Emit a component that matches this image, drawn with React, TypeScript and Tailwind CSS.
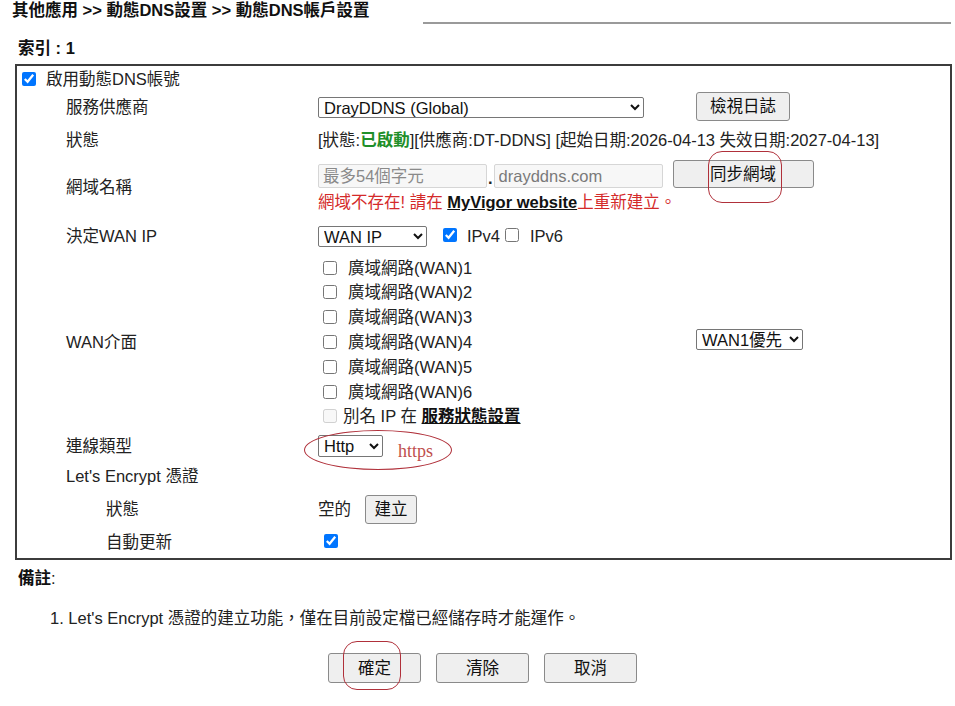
import React from "react";

const FONT = { fontFamily: '"Liberation Sans", Arial, "Noto Sans CJK TC", sans-serif' };

function Sel({ w, h = 21, text }: { w: number; h?: number; text: string }) {
  return (
    <select
      className="border border-[#767676] rounded-[2px] bg-white text-[#111] text-[16.5px] leading-[18px] px-[1px]"
      style={{ width: w, height: h }}
      defaultValue={text}
    >
      <option value={text}>{text}</option>
    </select>
  );
}

function Btn({ w, h, children }: { w: number; h: number; children: React.ReactNode }) {
  return (
    <button
      className="border border-[#8a8a8a] rounded-[3px] bg-[#efefef] text-[#111] text-[16.5px] leading-none flex items-center justify-center"
      style={{ width: w, height: h }}
    >
      {children}
    </button>
  );
}

function Cb({ checked = false, disabled = false }: { checked?: boolean; disabled?: boolean }) {
  return (
    <input
      type="checkbox"
      defaultChecked={checked}
      disabled={disabled}
      className="w-[14px] h-[14px] m-0 accent-[#0075ff] shrink-0"
    />
  );
}

function Row({ h, label, sub = false, children }: { h: number; label: string; sub?: boolean; children?: React.ReactNode }) {
  return (
    <div className="flex items-center" style={{ height: h }}>
      <div className={sub ? "pl-[89px] w-[301px] shrink-0" : "pl-[49px] w-[301px] shrink-0"}>{label}</div>
      <div className="flex-1 flex items-center">{children}</div>
    </div>
  );
}

export default function App() {
  const wans = [1, 2, 3, 4, 5, 6];
  return (
    <div className="relative w-[955px] h-[706px] bg-white text-[#222] text-[16.5px] leading-[20px] overflow-hidden" style={FONT}>
      {/* title */}
      <div className="flex items-start h-[24px]">
        <div className="pl-[12px] font-bold text-[#111] text-[16.5px] leading-[20px]">其他應用 &gt;&gt; 動態DNS設置 &gt;&gt; 動態DNS帳戶設置</div>
        <div className="ml-auto mr-[4px] mt-[22px] w-[528px] h-[1.5px] bg-[#9a9a9a]" />
      </div>
      <div className="mt-[14px] h-[20px] pl-[18px] font-bold text-[#111]">索引 : 1</div>

      {/* box */}
      <div className="mt-[6px] ml-[15px] w-[937px] border-2 border-[#3c3c3c] pb-[4px]">
        <div className="flex items-center h-[25px] pl-[5px] gap-[10px]">
          <Cb checked />
          <span>啟用動態DNS帳號</span>
        </div>

        <Row h={32} label="服務供應商">
          <Sel w={326} text="DrayDDNS (Global)" />
          <div className="ml-[52px] -mt-[1px]">
            <Btn w={94} h={29}>檢視日誌</Btn>
          </div>
        </Row>

        <Row h={34} label="狀態">
          <span>
            [狀態:<b className="text-[#1f8f2a]">已啟動</b>][供應商:DT-DDNS] [起始日期:2026-04-13 失效日期:2027-04-13]
          </span>
        </Row>

        <Row h={60} label="網域名稱">
          <div className="flex flex-col">
            <div className="flex items-center h-[30px]">
              <input
                placeholder="最多54個字元"
                className="w-[169px] h-[24px] mt-[4px] border border-[#d6d6d6] bg-[#f7f7f7] px-[4px] text-[16.5px] placeholder:text-[#8a8a8a] rounded-[2px]"
              />
              <span className="mx-[1px] mt-[8px] font-bold">.</span>
              <input
                defaultValue="drayddns.com"
                className="w-[169px] h-[24px] mt-[4px] border border-[#d6d6d6] bg-[#f7f7f7] px-[4px] text-[16.5px] text-[#7a7a7a] rounded-[2px]"
              />
              <div className="ml-[10px]">
                <Btn w={141} h={28}>同步網域</Btn>
              </div>
            </div>
            <div className="h-[26px] flex items-center text-[#d42a2a]">
              網域不存在! 請在&nbsp;<b className="text-[#111] underline">MyVigor website</b>上重新建立。
            </div>
          </div>
        </Row>

        <Row h={38} label="決定WAN IP">
          <Sel w={109} text="WAN IP" />
          <div className="ml-[16px]"><Cb checked /></div>
          <span className="ml-[10px]">IPv4</span>
          <div className="ml-[5px]"><Cb /></div>
          <span className="ml-[11px]">IPv6</span>
        </Row>

        <Row h={174} label="WAN介面">
          <div className="flex flex-col w-[378px]">
            {wans.map((n) => (
              <div key={n} className="flex items-center h-[24.8px] pl-[5px] gap-[11px]">
                <Cb />
                <span>廣域網路(WAN){n}</span>
              </div>
            ))}
            <div className="flex items-center h-[24.8px] pl-[5px] gap-[6px]">
              <Cb disabled />
              <span>
                別名 IP 在 <b className="underline text-[#111]">服務狀態設置</b>
              </span>
            </div>
          </div>
          <div className="-mt-[4px]">
            <Sel w={107} text="WAN1優先" />
          </div>
        </Row>

        <Row h={34} label="連線類型">
          <Sel w={65} h={22} text="Http" />
          <span className="ml-[15px] mt-[10px] text-[#c0504d] text-[18px]" style={{ fontFamily: '"Liberation Serif", serif' }}>https</span>
        </Row>

        <Row h={25} label="Let's Encrypt 憑證" />

        <Row h={42} label="狀態" sub>
          <span>空的</span>
          <div className="ml-[14px]">
            <Btn w={52} h={29}>建立</Btn>
          </div>
        </Row>

        <Row h={24} label="自動更新" sub>
          <div className="pl-[6px]"><Cb checked /></div>
        </Row>
      </div>

      <div className="mt-[8px] pl-[18px] h-[20px]"><b className="text-[#111]">備註</b>:</div>
      <div className="mt-[20px] pl-[50px] h-[20px] text-[#222]">1. Let's Encrypt 憑證的建立功能，僅在目前設定檔已經儲存時才能運作。</div>

      <div className="mt-[25px] pl-[328px] flex gap-[15px]">
        <Btn w={93} h={30}>確定</Btn>
        <Btn w={93} h={30}>清除</Btn>
        <Btn w={93} h={30}>取消</Btn>
      </div>

      {/* annotations */}
      <div className="absolute left-[708px] top-[151px] w-[74px] h-[52px] border border-[#b0303a] rounded-[14px]" />
      <div className="absolute left-[304px] top-[430px] w-[148px] h-[40px] border border-[#b0303a] rounded-[50%]" />
      <div className="absolute left-[343px] top-[641px] w-[58px] h-[49px] border border-[#b0303a] rounded-[14px]" />
    </div>
  );
}
